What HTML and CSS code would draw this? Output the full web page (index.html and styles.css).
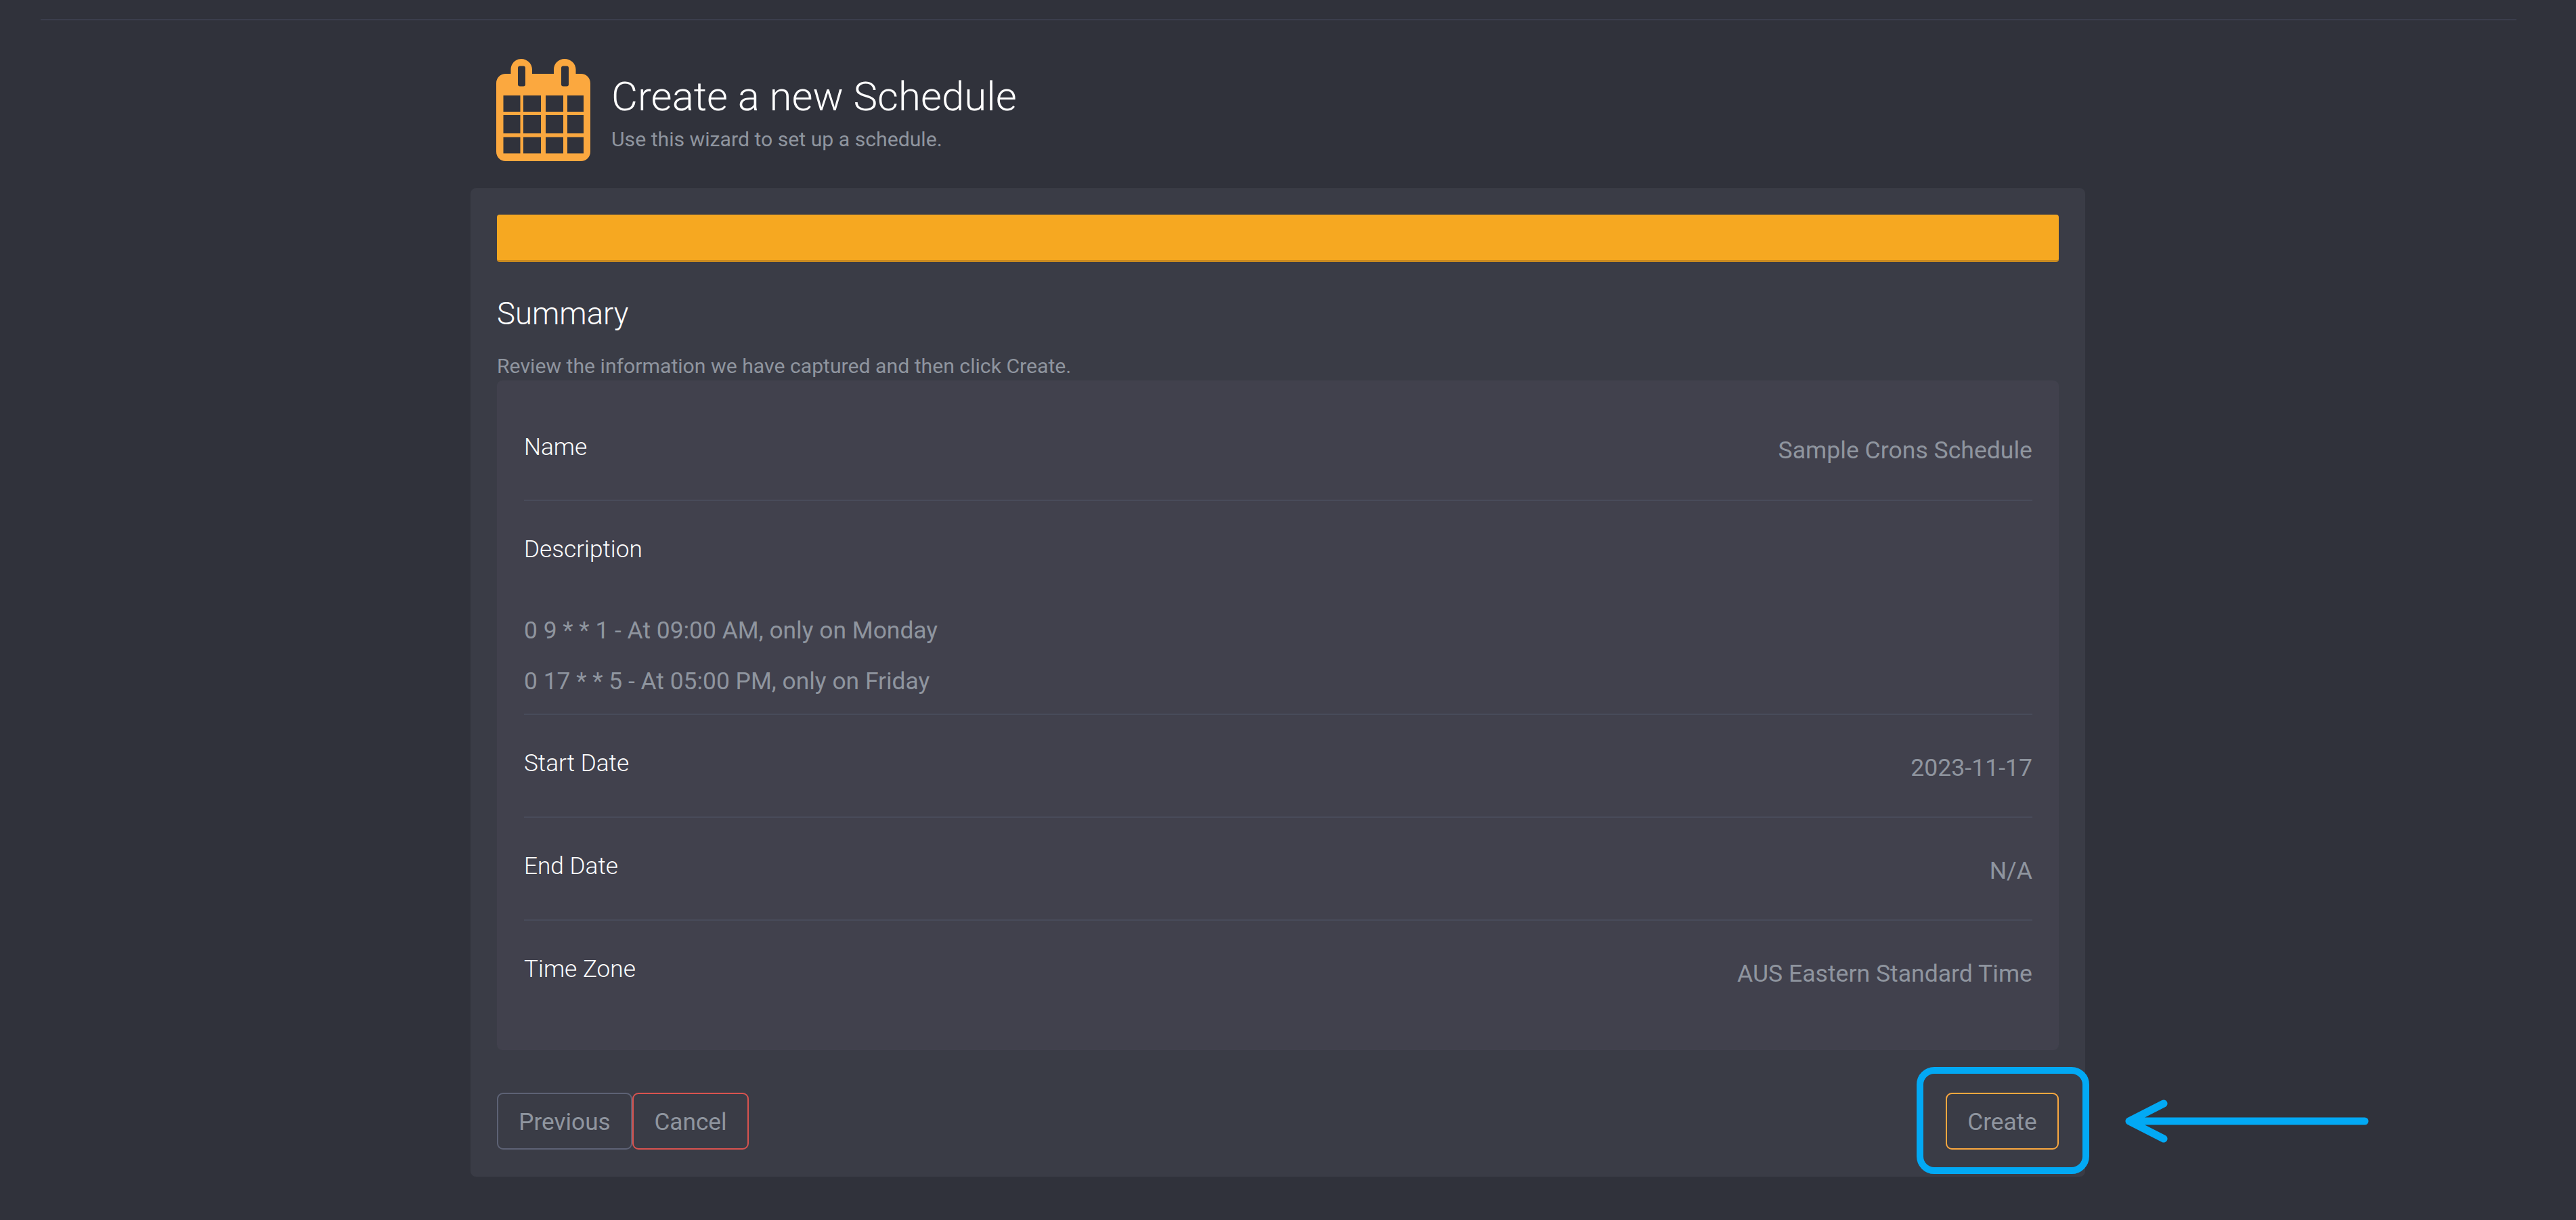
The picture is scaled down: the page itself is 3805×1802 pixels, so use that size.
FILE: index.html
```html
<!DOCTYPE html>
<html lang="en">
<head>
  <meta charset="UTF-8">
  <title>Create a new Schedule</title>
  <link rel="stylesheet" href="styles.css">
</head>
<body>

  <hr class="top-rule">

  <!-- Page header -->
  <div class="page-header">
    <svg class="header-icon" viewBox="0 0 139 151" width="139" height="151">
      <path class="cal" d="M14 22H21.5V15.5C21.5 7 28.5 0 37 0S53 7 53 15.5V22H85V15.5C85 7 92 0 101 0S117.5 7 117.5 15.5V22H125C133 22 139 28 139 36V137C139 145 133 151 125 151H14C6 151 0 145 0 137V36C0 28 6 22 14 22Z"/>
      <rect class="hole" x="32" y="10.5" width="11" height="30" rx="3"/>
      <rect class="hole" x="96" y="10.5" width="11" height="30" rx="3"/>
      <rect class="hole" x="10.5" y="54" width="25" height="24"/>
      <rect class="hole" x="40" y="54" width="26" height="24"/>
      <rect class="hole" x="73" y="54" width="26" height="24"/>
      <rect class="hole" x="105" y="54" width="24" height="24"/>
      <rect class="hole" x="10.5" y="83" width="25" height="27"/>
      <rect class="hole" x="40" y="83" width="26" height="27"/>
      <rect class="hole" x="73" y="83" width="26" height="27"/>
      <rect class="hole" x="105" y="83" width="24" height="27"/>
      <rect class="hole" x="10.5" y="115.5" width="25" height="24"/>
      <rect class="hole" x="40" y="115.5" width="26" height="24"/>
      <rect class="hole" x="73" y="115.5" width="26" height="24"/>
      <rect class="hole" x="105" y="115.5" width="24" height="24"/>
    </svg>
    <div class="header-text">
      <h1>Create a new Schedule</h1>
      <p>Use this wizard to set up a schedule.</p>
    </div>
  </div>

  <!-- Wizard card -->
  <div class="wizard-card">
    <div class="progress-bar"></div>

    <h2>Summary</h2>
    <p class="intro">Review the information we have captured and then click Create.</p>

    <div class="summary-panel">
      <div class="summary-row">
        <span class="row-label">Name</span>
        <span class="row-value">Sample Crons Schedule</span>
      </div>
      <div class="summary-row description-row">
        <span class="row-label">Description</span>
        <div class="cron-lines">
          <p>0 9 * * 1 - At 09:00 AM, only on Monday</p>
          <p>0 17 * * 5 - At 05:00 PM, only on Friday</p>
        </div>
      </div>
      <div class="summary-row">
        <span class="row-label">Start Date</span>
        <span class="row-value">2023-11-17</span>
      </div>
      <div class="summary-row">
        <span class="row-label">End Date</span>
        <span class="row-value">N/A</span>
      </div>
      <div class="summary-row last-row">
        <span class="row-label">Time Zone</span>
        <span class="row-value">AUS Eastern Standard Time</span>
      </div>
    </div>

    <div class="wizard-actions">
      <div class="left-actions">
        <button class="btn btn-previous">Previous</button>
        <button class="btn btn-cancel">Cancel</button>
      </div>
      <button class="btn btn-create">Create</button>
    </div>
  </div>

  <!-- Annotation over the screenshot -->
  <div class="callout-box"></div>
  <svg class="callout-arrow" viewBox="0 0 370 72" width="370" height="72">
    <path d="M358 36H10M61 10L10 36L61 62"/>
  </svg>

</body>
</html>
```

FILE: styles.css
```css
body {
  margin: 0;
  background: #30323b;
  font-family: Roboto, sans-serif;
  color: #fff;
  height: 1802px;
  overflow: hidden;
  position: relative;
}

.top-rule {
  margin: 28px 88px 0 60px;
  border: none;
  height: 2px;
  background: #3b3e4c;
}

.page-header {
  display: flex;
  align-items: flex-start;
  gap: 31px;
  margin: 57px 0 0 733px;
  height: 191px;
}

.cal {
  fill: #fba83f;
}

.hole {
  fill: #30323b;
}

.header-icon {
  flex: none;
}

h1 {
  margin: 21px 0 0 0;
  font-size: 60px;
  font-weight: 300;
  line-height: 70px;
}

.header-text p {
  margin: 9px 0 0 0;
  font-size: 30.2px;
  line-height: 38px;
  color: #8f959f;
}

.wizard-card {
  width: 2385px;
  height: 1460px;
  margin-left: 695px;
  box-sizing: border-box;
  padding: 39px 39px 0 39px;
  background: #3a3c46;
  border-radius: 8px;
}

.progress-bar {
  height: 70px;
  box-sizing: border-box;
  background: #f6a821;
  border-bottom: 3px solid #c98a1f;
  border-radius: 4px;
}

h2 {
  margin: 47px 0 0 0;
  font-size: 45.5px;
  font-weight: 300;
  line-height: 60px;
}

.intro {
  margin: 27px 0 1px 0;
  font-size: 30.2px;
  line-height: 40px;
  color: #8f959f;
}

.summary-panel {
  background: #41414d;
  border-radius: 8px;
  padding: 0 39px 0 40px;
  height: 989px;
  box-sizing: border-box;
}

.summary-row {
  display: flex;
  justify-content: space-between;
  align-items: flex-start;
  height: 152px;
  box-sizing: border-box;
  padding-top: 51px;
  border-bottom: 2px solid #484b5a;
}

.summary-row:first-child {
  height: 178px;
  padding-top: 78px;
}

.description-row {
  display: block;
  height: 316px;
  padding-top: 51px;
}

.last-row {
  border-bottom: none;
}

.row-label {
  font-size: 35.2px;
  font-weight: 300;
  line-height: 40px;
}

.row-value {
  font-size: 35.6px;
  line-height: 40px;
  margin-top: 7px;
  color: #8f959f;
}

.summary-row:first-child .row-value {
  margin-top: 5px;
}

.cron-lines {
  margin-top: 80px;
}

.cron-lines p {
  margin: 0 0 35px 0;
  font-size: 35.4px;
  line-height: 40px;
  color: #8f959f;
}

.wizard-actions {
  display: flex;
  justify-content: space-between;
  margin-top: 63px;
}

.btn {
  height: 84px;
  box-sizing: border-box;
  background: transparent;
  border-radius: 9px;
  color: #8f959f;
  font-family: Roboto, sans-serif;
  font-size: 35.2px;
  padding: 1px 0 0 0;
}

.btn-previous {
  width: 200px;
  border: 2px solid #5d6275;
}

.btn-cancel {
  width: 172px;
  border: 2px solid #d9534f;
}

.btn-create {
  width: 167px;
  border: 2px solid #fba83f;
}

.left-actions {
  display: flex;
}

/* annotation drawn on top of the page */
.callout-box {
  position: absolute;
  left: 2831px;
  top: 1576px;
  width: 255px;
  height: 158px;
  box-sizing: border-box;
  border: 10px solid #02a9f4;
  border-radius: 26px;
}

.callout-arrow {
  position: absolute;
  left: 3135px;
  top: 1620px;
}

.callout-arrow path {
  fill: none;
  stroke: #02a9f4;
  stroke-width: 11;
  stroke-linecap: round;
  stroke-linejoin: round;
}
```
